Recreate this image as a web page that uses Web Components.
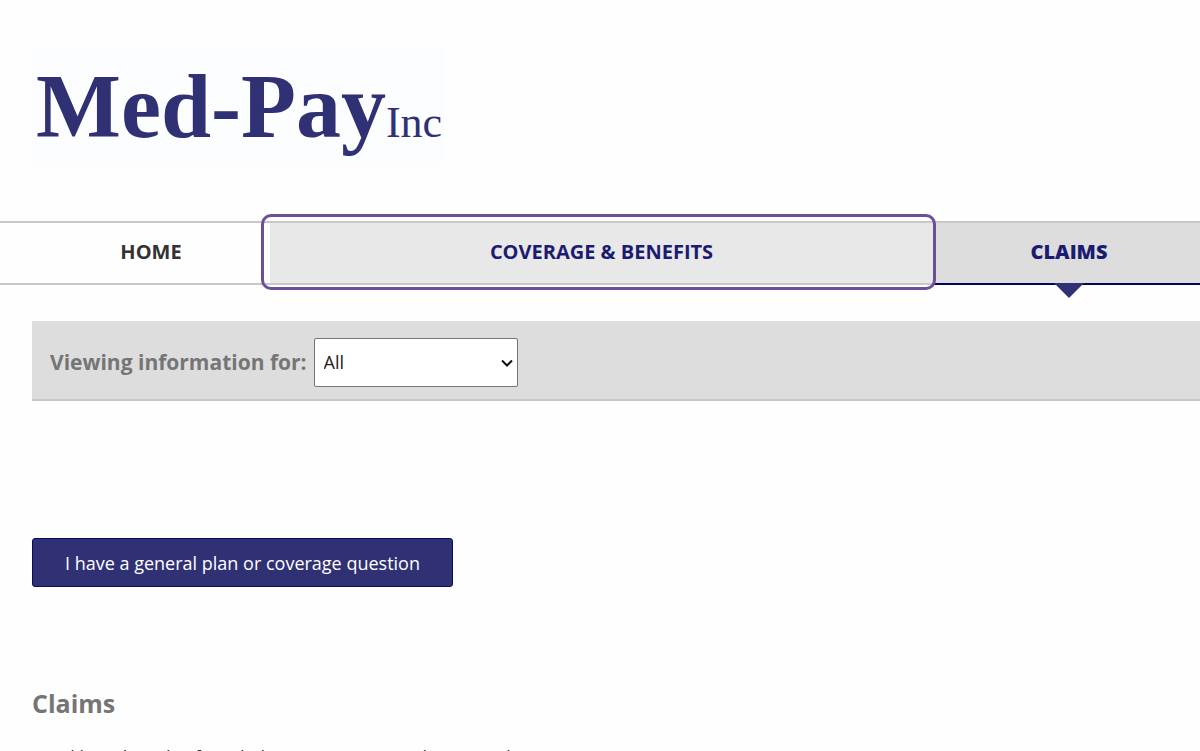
<!DOCTYPE html>
<html lang="en">
<head>
<meta charset="utf-8">
<title>Med-Pay Inc - Claims</title>
<style>
html{overflow:hidden}
body{margin:0;background:#fefefe;font-family:"Open Sans","Noto Sans",sans-serif;color:#333}
</style>
</head>
<body>
<member-portal></member-portal>
<script>
const define = (name, html) => customElements.define(name, class extends HTMLElement {
  constructor() {
    super();
    const t = document.createElement('template');
    t.innerHTML = html;
    this.attachShadow({mode: 'open'}).append(t.content.cloneNode(true));
  }
});

define('brand-logo', `<style>
:host{display:block;padding:47px 32px 54px}
a{display:inline-flex;align-items:baseline;height:120px;box-sizing:border-box;padding:0 2px 0 4px;background:#fcfdff;color:#303174;text-decoration:none;font-family:"Liberation Serif",serif;font-weight:700;font-size:90px;line-height:120px}
small{font-size:44px;font-weight:400}
</style><a href="#"><span>Med-Pay</span><small>Inc</small></a>`);

define('nav-item', `<style>
:host{display:block;position:relative;box-sizing:border-box;height:64px;border-top:2px solid #c8c8c8;border-bottom:2px solid #c8c8c8}
a{display:flex;align-items:center;justify-content:center;height:58px;padding-bottom:2px;color:#333;font-size:20px;line-height:26px;font-weight:700;text-decoration:none;outline:none;text-transform:uppercase}
:host([focused]){z-index:1}
:host([focused]) a{background:#e8e8e8;color:#1c1b72}
:host([focused])::before{content:"";position:absolute;inset:-9px -3px -7px -9px;border:3px solid #6d4f98;border-radius:10px}
:host([current]){border-bottom-color:#04045c}
:host([current]) a{background:#ddd;color:#1c1b72;font-weight:800}
:host([current])::after{content:"";position:absolute;top:100%;left:50%;margin-left:-15px;border:15px solid transparent;border-top-color:#303174;border-bottom:0}
</style><a href="#"><slot></slot></a>`);

define('main-nav', `<style>
:host{display:block}
nav{display:grid;grid-template-columns:270fr 663fr 272fr;margin-right:-5px}
nav-item:first-child{padding-left:32px}
</style><nav><nav-item>Home</nav-item><nav-item focused>Coverage &amp; Benefits</nav-item><nav-item current>Claims</nav-item></nav>`);

define('member-filter', `<style>
:host{display:flex;align-items:center;gap:7px;box-sizing:border-box;height:80px;margin:36px 0 0 32px;padding:4px 18px 0;background:#ddd;border-bottom:2px solid #c8c8c8}
label{color:#757575;font-size:21px;line-height:28px;font-weight:700}
.box{position:relative}
select{display:block;appearance:none;width:204px;height:49px;margin:0;padding:0 32px 0 9px;border:1px solid #767676;border-radius:2px;background:#fff;color:#222;font:18px "Open Sans",sans-serif}
svg{position:absolute;right:5px;top:21px;pointer-events:none}
</style><label for="member">Viewing information for:</label><div class="box"><select id="member"><option>All</option></select><svg width="12" height="8" viewBox="0 0 12 8" fill="none" stroke="#111" stroke-width="2"><path d="M1 1.5 6 6.5 11 1.5"/></svg></div>`);

define('action-button', `<style>
:host{display:block}
button{height:49px;padding:0 32px;border:1px solid #0b0b62;border-radius:3px;background:#303174;color:#fff;font:18px/26px "Open Sans",sans-serif}
</style><button type="button"><slot></slot></button>`);

define('claims-section', `<style>
:host{display:block;padding:98px 32px 0}
h1{margin:0;color:#757575;font-size:25px;line-height:36px;font-weight:700}
p{margin:24px 0 0;color:#333;font-size:18px;line-height:24px}
</style><h1>Claims</h1><p><slot></slot></p>`);

define('member-portal', `<style>
:host{display:block}
main{display:block}
action-button{padding:137px 32px 0}
</style>
<header><brand-logo></brand-logo><main-nav></main-nav></header>
<main><member-filter></member-filter>
<action-button>I have a general plan or coverage question</action-button>
<claims-section>Used here but also found Claims on your member record</claims-section></main>`);
</script>
</body>
</html>
